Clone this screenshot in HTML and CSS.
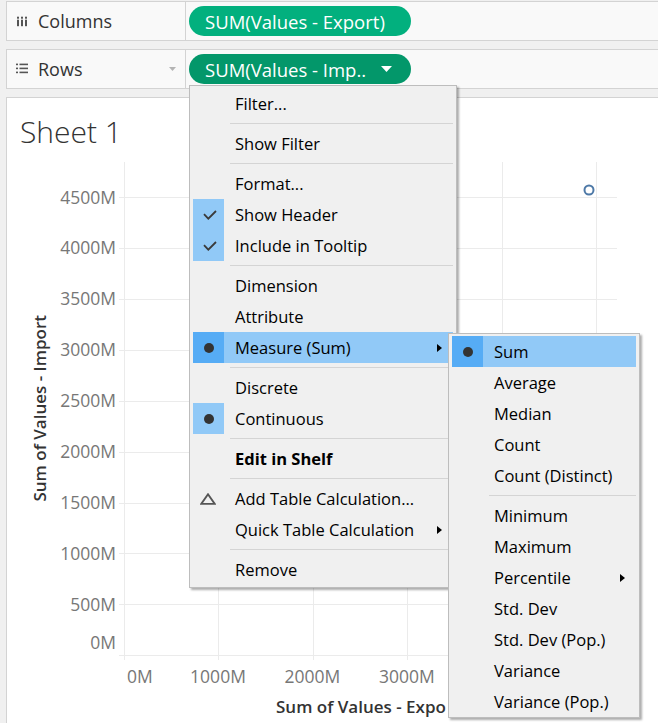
FILE: index.html
```html
<!DOCTYPE html>
<html lang="en">
<head>
<meta charset="utf-8">
<title>Sheet 1</title>
<link rel="stylesheet" href="styles.css">
</head>
<body>
<div class="page">
  <div class="shelf">
    <div class="shelf-label">
      <svg class="shelf-icon" viewBox="0 0 12 12" aria-hidden="true">
        <rect x="1" y="1.7" width="2" height="2" fill="#555"/>
        <rect x="5" y="1.7" width="2" height="2" fill="#555"/>
        <rect x="9" y="1.7" width="2" height="2" fill="#555"/>
        <rect x="1" y="4.7" width="2" height="6.5" fill="#555"/>
        <rect x="5" y="4.7" width="2" height="6.5" fill="#555"/>
        <rect x="9" y="4.7" width="2" height="6.5" fill="#555"/>
      </svg>
      <span>Columns</span>
    </div>
    <div class="shelf-body">
      <span class="pill">SUM(Values - Export)</span>
    </div>
  </div>

  <div class="shelf">
    <div class="shelf-label">
      <svg class="shelf-icon" viewBox="0 0 12 12" aria-hidden="true">
        <rect x="0" y="0.6" width="2" height="1.6" fill="#555"/>
        <rect x="3.5" y="0.6" width="8.5" height="1.6" fill="#555"/>
        <rect x="0" y="4.6" width="2" height="1.6" fill="#555"/>
        <rect x="3.5" y="4.6" width="8.5" height="1.6" fill="#555"/>
        <rect x="0" y="8.6" width="2" height="1.6" fill="#555"/>
        <rect x="3.5" y="8.6" width="8.5" height="1.6" fill="#555"/>
      </svg>
      <span>Rows</span>
      <svg class="shelf-caret" viewBox="0 0 7 4" aria-hidden="true"><polygon points="0,0 7,0 3.5,4" fill="#b4b4b4"/></svg>
    </div>
    <div class="shelf-body">
      <span class="pill pill-active">SUM(Values - Imp..
        <svg class="pill-caret" viewBox="0 0 11 6" aria-hidden="true"><polygon points="0,0 11,0 5.5,6" fill="#fff"/></svg>
      </span>
    </div>
  </div>

  <div class="sheet">
    <h1 class="sheet-title">Sheet 1</h1>
    <div class="chart">
      <div class="y-title"><span>Sum of Values - Import</span></div>
      <div class="y-ticks">
        <div class="y-tick">4500M</div>
        <div class="y-tick">4000M</div>
        <div class="y-tick">3500M</div>
        <div class="y-tick">3000M</div>
        <div class="y-tick">2500M</div>
        <div class="y-tick">2000M</div>
        <div class="y-tick">1500M</div>
        <div class="y-tick">1000M</div>
        <div class="y-tick">500M</div>
        <div class="y-tick y-tick-zero">0M</div>
      </div>
      <svg class="plot" viewBox="0 0 539 500" aria-hidden="true">
        <g stroke="#ebebeb" stroke-width="1">
          <line x1="0" y1="35.5" x2="498" y2="35.5"/>
          <line x1="0" y1="86.5" x2="498" y2="86.5"/>
          <line x1="0" y1="137.5" x2="498" y2="137.5"/>
          <line x1="0" y1="188.5" x2="498" y2="188.5"/>
          <line x1="0" y1="239.5" x2="498" y2="239.5"/>
          <line x1="0" y1="290.5" x2="498" y2="290.5"/>
          <line x1="0" y1="341.5" x2="498" y2="341.5"/>
          <line x1="0" y1="391.5" x2="498" y2="391.5"/>
          <line x1="0" y1="442.5" x2="498" y2="442.5"/>
          <line x1="0" y1="493.5" x2="498" y2="493.5"/>
          <line x1="5.5" y1="0" x2="5.5" y2="498"/>
          <line x1="99.5" y1="0" x2="99.5" y2="498"/>
          <line x1="194.5" y1="0" x2="194.5" y2="498"/>
          <line x1="288.5" y1="0" x2="288.5" y2="498"/>
          <line x1="383.5" y1="0" x2="383.5" y2="498"/>
          <line x1="477.5" y1="0" x2="477.5" y2="498"/>
        </g>
        <circle cx="470" cy="28" r="4.5" fill="none" stroke="#4e79a7" stroke-width="2"/>
      </svg>
      <div class="x-ticks">
        <div class="x-tick">0M</div>
        <div class="x-tick">1000M</div>
        <div class="x-tick">2000M</div>
        <div class="x-tick">3000M</div>
      </div>
      <div class="x-title">Sum of Values - Expo</div>
    </div>
  </div>

  <ul class="menu menu-main">
    <li class="mi"><span class="mi-icon"></span><span class="mi-label">Filter...</span></li>
    <li class="sep"></li>
    <li class="mi"><span class="mi-icon"></span><span class="mi-label">Show Filter</span></li>
    <li class="sep"></li>
    <li class="mi"><span class="mi-icon"></span><span class="mi-label">Format...</span></li>
    <li class="mi"><span class="mi-icon is-on"><svg class="check" viewBox="0 0 14 10" aria-hidden="true"><polyline points="1,4.2 5.3,8.6 13,1" fill="none" stroke="#3a3a3a" stroke-width="1.8"/></svg></span><span class="mi-label">Show Header</span></li>
    <li class="mi"><span class="mi-icon is-on"><svg class="check" viewBox="0 0 14 10" aria-hidden="true"><polyline points="1,4.2 5.3,8.6 13,1" fill="none" stroke="#3a3a3a" stroke-width="1.8"/></svg></span><span class="mi-label">Include in Tooltip</span></li>
    <li class="sep"></li>
    <li class="mi"><span class="mi-icon"></span><span class="mi-label">Dimension</span></li>
    <li class="mi"><span class="mi-icon"></span><span class="mi-label">Attribute</span></li>
    <li class="mi mi-hl"><span class="mi-icon"><span class="dot"></span></span><span class="mi-label">Measure (Sum)</span><span class="mi-arrow"></span></li>
    <li class="sep"></li>
    <li class="mi"><span class="mi-icon"></span><span class="mi-label">Discrete</span></li>
    <li class="mi"><span class="mi-icon is-on"><span class="dot"></span></span><span class="mi-label">Continuous</span></li>
    <li class="sep"></li>
    <li class="mi mi-bold"><span class="mi-icon"></span><span class="mi-label">Edit in Shelf</span></li>
    <li class="sep"></li>
    <li class="mi"><span class="mi-icon"><svg class="delta" viewBox="0 0 16 12" aria-hidden="true"><polygon points="8,1.3 14.8,10.9 1.2,10.9" fill="none" stroke="#555" stroke-width="1.9" stroke-linejoin="miter"/></svg></span><span class="mi-label">Add Table Calculation...</span></li>
    <li class="mi"><span class="mi-icon"></span><span class="mi-label">Quick Table Calculation</span><span class="mi-arrow"></span></li>
    <li class="sep"></li>
    <li class="mi"><span class="mi-icon"></span><span class="mi-label">Remove</span></li>
  </ul>

  <ul class="menu menu-sub">
    <li class="mi mi-hl"><span class="mi-icon"><span class="dot"></span></span><span class="mi-label">Sum</span></li>
    <li class="mi"><span class="mi-icon"></span><span class="mi-label">Average</span></li>
    <li class="mi"><span class="mi-icon"></span><span class="mi-label">Median</span></li>
    <li class="mi"><span class="mi-icon"></span><span class="mi-label">Count</span></li>
    <li class="mi"><span class="mi-icon"></span><span class="mi-label">Count (Distinct)</span></li>
    <li class="sep"></li>
    <li class="mi"><span class="mi-icon"></span><span class="mi-label">Minimum</span></li>
    <li class="mi"><span class="mi-icon"></span><span class="mi-label">Maximum</span></li>
    <li class="mi"><span class="mi-icon"></span><span class="mi-label">Percentile</span><span class="mi-arrow"></span></li>
    <li class="mi"><span class="mi-icon"></span><span class="mi-label">Std. Dev</span></li>
    <li class="mi"><span class="mi-icon"></span><span class="mi-label">Std. Dev (Pop.)</span></li>
    <li class="mi"><span class="mi-icon"></span><span class="mi-label">Variance</span></li>
    <li class="mi"><span class="mi-icon"></span><span class="mi-label">Variance (Pop.)</span></li>
  </ul>
</div>
</body>
</html>
```

FILE: styles.css
```css
* { box-sizing: border-box; }

html, body {
  margin: 0;
  padding: 0;
}

body {
  width: 658px;
  height: 723px;
  overflow: hidden;
  background: #f0f0f0;
  font-family: "Open Sans", "Noto Sans", sans-serif;
  color: #333;
}

.page {
  position: relative;
  height: 723px;
  padding-top: 1px;
}

/* ---------- shelves ---------- */
.shelf {
  display: flex;
  height: 40px;
  margin-left: 6px;
  border: 1px solid #d3d3d3;
  border-right: 0;
  background: #f9f9f9;
}

.shelf + .shelf { margin-top: 8px; }

.shelf-label {
  flex: none;
  width: 179px;
  display: flex;
  align-items: center;
  padding-left: 9px;
  border-right: 1px solid #d3d3d3;
  font-size: 18px;
  color: #333;
}

.shelf-icon {
  flex: none;
  width: 12px;
  height: 12px;
  margin-right: 10px;
}

.shelf-caret {
  width: 7px;
  height: 4px;
  margin-left: auto;
  margin-right: 9px;
}

.shelf-body {
  flex: 1;
  display: flex;
  align-items: center;
  padding-left: 3px;
}

.pill {
  display: flex;
  align-items: center;
  width: 222px;
  height: 30px;
  padding-left: 16px;
  border-radius: 15px;
  background: #02b07e;
  color: #fff;
  font-size: 18.5px;
  white-space: nowrap;
}

.pill-active { background: #03976a; }

.pill-caret {
  width: 11px;
  height: 6px;
  margin-left: auto;
  margin-right: 19px;
}

/* ---------- sheet ---------- */
.sheet {
  height: 640px;
  margin-top: 8px;
  margin-left: 6px;
  padding-top: 14px;
  background: #fff;
  border: 1px solid #d3d3d3;
  border-right: 0;
}

.sheet-title {
  margin: 0 0 10px 13px;
  font-size: 30px;
  font-weight: 300;
  line-height: 40px;
  color: #333;
}

.chart {
  display: grid;
  grid-template-columns: 50px 59px 3px 539px;
  grid-template-rows: 500px 28px 34px;
}

.y-title {
  grid-column: 1;
  grid-row: 1;
  height: 493px;
  display: flex;
  align-items: center;
}

.y-title span {
  margin-left: 21px;
  writing-mode: vertical-rl;
  transform: rotate(180deg);
  line-height: 24px;
  font-size: 17px;
  font-weight: 600;
  color: #333;
  white-space: nowrap;
}

.y-ticks {
  grid-column: 2;
  grid-row: 1;
  padding-top: 9.5px;
  text-align: right;
  font-size: 17.5px;
  color: #777;
  white-space: nowrap;
}

.y-tick {
  height: 50.89px;
  line-height: 50.89px;
}

.y-tick-zero {
  height: 27px;
  line-height: 27px;
}

.plot {
  grid-column: 4;
  grid-row: 1;
  display: block;
  width: 539px;
  height: 500px;
}

.x-ticks {
  grid-column: 4;
  grid-row: 2;
  display: flex;
  padding-left: 8px;
  font-size: 17.5px;
  line-height: 28px;
  color: #777;
  white-space: nowrap;
}

.x-tick {
  flex: none;
  width: 94.4px;
  text-align: center;
}

.x-tick:first-child {
  width: 43.8px;
  text-align: left;
}

.x-title {
  grid-column: 4;
  grid-row: 3;
  padding-left: 157px;
  font-size: 17px;
  font-weight: 600;
  line-height: 34px;
  color: #333;
  white-space: nowrap;
}

/* ---------- context menus ---------- */
.menu {
  position: absolute;
  margin: 0;
  padding: 2px 3px;
  list-style: none;
  background: #f0f0f0;
  border: 1px solid #bdbdbd;
  box-shadow: 2px 2px 2px rgba(0, 0, 0, 0.32);
  font-size: 16.5px;
  color: #000;
}

.menu-main {
  left: 189px;
  top: 85px;
  width: 268px;
}

.menu-sub {
  left: 448px;
  top: 333px;
  width: 192px;
  padding-bottom: 0;
}

.mi {
  display: flex;
  align-items: center;
  height: 31px;
  white-space: nowrap;
}

.mi-icon {
  flex: none;
  width: 31px;
  height: 31px;
  display: flex;
  align-items: center;
  justify-content: center;
}

.mi-icon.is-on { background: #91c9f7; }

.mi-label { padding-left: 11px; }

.mi-bold { font-weight: 700; }

.mi-hl { background: #91c9f7; }
.mi-hl .mi-icon { background: #56acf5; }

.mi-arrow {
  width: 0;
  height: 0;
  margin-left: auto;
  margin-right: 11px;
  border-left: 5px solid #000;
  border-top: 4.5px solid transparent;
  border-bottom: 4.5px solid transparent;
}

.dot {
  width: 10px;
  height: 10px;
  border-radius: 50%;
  background: #333;
}

.check {
  width: 14px;
  height: 10px;
  margin-left: 2px;
}

.delta {
  width: 16px;
  height: 12px;
  margin-left: -1px;
}

.sep {
  height: 9px;
  padding: 4px 0 4px 37px;
}

.sep::before {
  content: "";
  display: block;
  height: 1px;
  background: #d4d4d4;
}
```
